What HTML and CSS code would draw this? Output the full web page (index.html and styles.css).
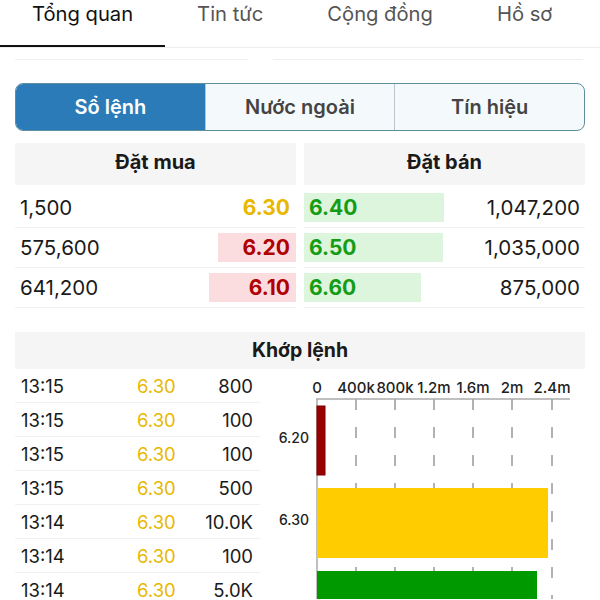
FILE: index.html
```html
<!DOCTYPE html>
<html lang="vi">
<head>
    <meta charset="UTF-8">
    <meta name="viewport" content="width=device-width, initial-scale=1.0">
    <title>Sổ lệnh</title>
    <link rel="stylesheet" href="styles.css">
</head>
<body>
    <nav class="tabs">
        <div class="tab active">Tổng quan</div>
        <div class="tab">Tin tức</div>
        <div class="tab">Cộng đồng</div>
        <div class="tab">Hồ sơ</div>
    </nav>
    <div class="ghost">
        <span class="ghost-left"></span>
        <span class="ghost-right"></span>
    </div>

    <div class="segment">
        <div class="seg active">Sổ lệnh</div>
        <div class="seg">Nước ngoài</div>
        <div class="seg">Tín hiệu</div>
    </div>

    <!-- Sổ lệnh -->
    <section class="book">
        <div class="side">
            <div class="side-head">Đặt mua</div>
            <div class="row">
                <span class="qty">1,500</span>
                <span class="price bid yellow" style="width: 0px">6.30</span>
            </div>
            <div class="row">
                <span class="qty">575,600</span>
                <span class="price bid red" style="width: 78px">6.20</span>
            </div>
            <div class="row">
                <span class="qty">641,200</span>
                <span class="price bid red" style="width: 87px">6.10</span>
            </div>
        </div>
        <div class="side">
            <div class="side-head">Đặt bán</div>
            <div class="row">
                <span class="price ask green" style="width: 140px">6.40</span>
                <span class="qty">1,047,200</span>
            </div>
            <div class="row">
                <span class="price ask green" style="width: 139px">6.50</span>
                <span class="qty">1,035,000</span>
            </div>
            <div class="row">
                <span class="price ask green" style="width: 117px">6.60</span>
                <span class="qty">875,000</span>
            </div>
        </div>
    </section>

    <!-- Khớp lệnh -->
    <section class="match">
        <div class="match-head">Khớp lệnh</div>
        <div class="match-body">
            <div class="trades">
                <div class="trade"><span>13:15</span><span class="tp">6.30</span><span class="tv">800</span></div>
                <div class="trade"><span>13:15</span><span class="tp">6.30</span><span class="tv">100</span></div>
                <div class="trade"><span>13:15</span><span class="tp">6.30</span><span class="tv">100</span></div>
                <div class="trade"><span>13:15</span><span class="tp">6.30</span><span class="tv">500</span></div>
                <div class="trade"><span>13:14</span><span class="tp">6.30</span><span class="tv">10.0K</span></div>
                <div class="trade"><span>13:14</span><span class="tp">6.30</span><span class="tv">100</span></div>
                <div class="trade"><span>13:14</span><span class="tp">6.30</span><span class="tv">5.0K</span></div>
            </div>
            <svg class="chart" width="325" height="230" viewBox="0 0 325 230">
                <g class="xlabels">
                    <text x="57" y="24">0</text>
                    <text x="96" y="24">400k</text>
                    <text x="135" y="24">800k</text>
                    <text x="174" y="24">1.2m</text>
                    <text x="213" y="24">1.6m</text>
                    <text x="252" y="24">2m</text>
                    <text x="292" y="24">2.4m</text>
                </g>
                <g class="grid">
                    <line x1="96" y1="30" x2="96" y2="230"/>
                    <line x1="135" y1="30" x2="135" y2="230"/>
                    <line x1="174" y1="30" x2="174" y2="230"/>
                    <line x1="213" y1="30" x2="213" y2="230"/>
                    <line x1="252" y1="30" x2="252" y2="230"/>
                    <line x1="292" y1="30" x2="292" y2="230"/>
                </g>
                <line class="axis" x1="56" y1="30" x2="310" y2="30"/>
                <line class="axis" x1="57" y1="30" x2="57" y2="230"/>
                <rect x="57" y="37" width="8" height="69" fill="#990000" stroke="#7a0000" stroke-width="1"/>
                <rect x="57" y="119" width="231" height="70" fill="#ffcc00"/>
                <rect x="57" y="202" width="220" height="70" fill="#009900"/>
                <g class="ylabels">
                    <text x="49" y="74">6.20</text>
                    <text x="49" y="156">6.30</text>
                </g>
            </svg>
        </div>
    </section>
</body>
</html>
```

FILE: styles.css
```css
body {
    margin: 0;
    padding: 0;
    background-color: #fff;
    font-family: Inter, "Noto Sans", sans-serif;
    color: #1a1a1a;
    overflow: hidden;
    height: 600px;
}

/* onglets du haut */
.tabs {
    display: flex;
    height: 47px;
    border-bottom: 1px solid #eeeeee;
}
.tab {
    padding: 0 32px;
    font-size: 20.2px;
    line-height: 28px;
    color: #555;
    box-sizing: border-box;
    height: 47px;
}
.tab.active {
    color: #111;
    border-bottom: 2px solid #111;
}
.ghost {
    display: flex;
    gap: 25px;
    padding: 0 17px 0 15px;
    margin-top: 11px;
}
.ghost span {
    height: 1px;
    background-color: #f0f0f0;
}
.ghost-left { width: 233px; }
.ghost-right { flex: 1; }

/* segmented control */
.segment {
    display: flex;
    margin: 23px 15px 0 15px;
    height: 48px;
    border: 1.5px solid #5e8f9e;
    border-radius: 8px;
    overflow: hidden;
    box-sizing: border-box;
    background-color: #f4fafc;
}
.seg {
    flex: 1;
    display: flex;
    align-items: center;
    justify-content: center;
    font-size: 20px;
    font-weight: 600;
    color: #444;
    border-left: 1px solid #b9c6cc;
}
.seg:first-child {
    border-left: none;
}
.seg.active {
    background-color: #2b7bb9;
    color: #fff;
}

/* sổ lệnh */
.book {
    display: flex;
    gap: 8px;
    margin: 12px 15px 0 15px;
}
.side {
    flex: 1;
}
.side-head {
    background-color: #f5f5f5;
    height: 42px;
    line-height: 38px;
    text-align: center;
    font-size: 20px;
    font-weight: 700;
    margin-bottom: 3px;
}
.row {
    display: flex;
    justify-content: space-between;
    align-items: center;
    height: 40px;
    border-bottom: 1px solid #f1f1f1;
    box-sizing: border-box;
    font-size: 20.5px;
}
.qty {
    padding: 0 5px;
}
.price {
    box-sizing: border-box;
    height: 29px;
    line-height: 29px;
    font-size: 21px;
    font-weight: 700;
    white-space: nowrap;
}
.price.bid {
    direction: rtl;
    text-align: right;
    padding-right: 6px;
}
.price.ask {
    padding-left: 5px;
}
.yellow { color: #e8b800; }
.red { color: #b00000; background-color: #fbdcdf; }
.green { color: #159c15; background-color: #ddf4dd; }

/* khớp lệnh */
.match {
    margin: 24px 15px 0 15px;
}
.match-head {
    background-color: #f5f5f5;
    height: 37px;
    line-height: 37px;
    text-align: center;
    font-size: 19.5px;
    font-weight: 700;
}
.match-body {
    display: flex;
}
.trades {
    width: 245px;
}
.trade {
    display: flex;
    align-items: center;
    height: 34px;
    border-bottom: 1px solid #f1f1f1;
    box-sizing: border-box;
    font-size: 18.5px;
    padding-left: 6px;
}
.trade span:first-child {
    width: 116px;
}
.tp {
    color: #e8b800;
    width: 50px;
}
.tv {
    flex: 1;
    text-align: right;
    padding-right: 7px;
}

.chart {
    display: block;
    margin-top: 0;
}
.xlabels text {
    font-size: 15px;
    font-weight: 500;
    text-anchor: middle;
    fill: #222;
}
.ylabels text {
    font-size: 14px;
    font-weight: 500;
    text-anchor: end;
    fill: #222;
}
.grid line {
    stroke: #999;
    stroke-width: 1.5;
    stroke-dasharray: 11 17;
}
.axis {
    stroke: #aaa;
    stroke-width: 1.5;
}
```
